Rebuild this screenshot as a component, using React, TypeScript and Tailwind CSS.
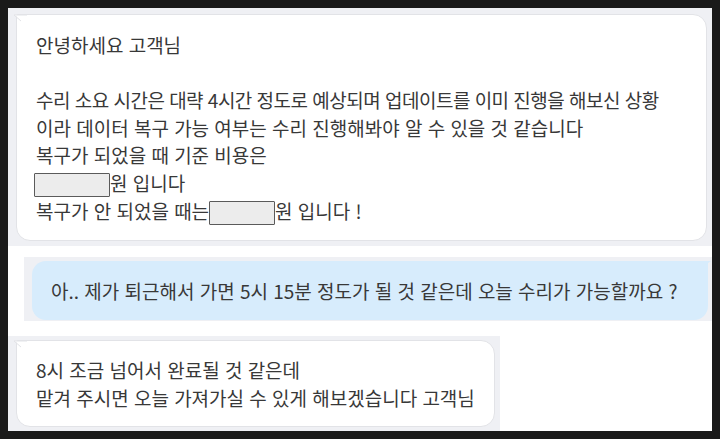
import React from "react";

const font = { fontFamily: '"Noto Sans CJK KR", "Noto Sans", sans-serif' };

function Tail({ side }: { side: "left" | "right" }) {
  // small pointed corner of a chat bubble
  if (side === "left") {
    return (
      <svg className="absolute -left-[4px] -top-px" width="14" height="10" viewBox="0 0 14 10">
        <path d="M1 1 L14 1 L14 9 Z" fill="#ffffff" />
        <path d="M14 1 L1 1 L8 7" fill="none" stroke="#e2e3e7" strokeWidth="1" />
      </svg>
    );
  }
  return (
    <svg className="absolute -right-[4px] top-0" width="14" height="10" viewBox="0 0 14 10">
      <path d="M13 0 L0 0 L0 9 Z" fill="#d7ecfc" />
    </svg>
  );
}

function Redacted({ w }: { w: string }) {
  return (
    <span
      className={`inline-block h-[24px] align-[-6px] border border-[#5a5a5a] bg-[#ececec] rounded-[1px] ${w}`}
    />
  );
}

export default function App() {
  return (
    <div
      className="w-[720px] h-[439px] bg-[#1a1a1a] p-2 flex flex-col text-[19px] leading-[27.5px] text-[#383838] whitespace-nowrap [word-spacing:1px]"
      style={font}
    >
      <div className="flex-1 bg-white flex flex-col">
        {/* first answer */}
        <div className="bg-[#eff0f4] pl-2 pr-[5px] pt-[6px] pb-[5px]">
          <div className="relative bg-white border border-[#e2e3e7] rounded-[14px] rounded-tl-[2px] pl-[19px] pr-3 pt-4 pb-[15px]">
            <Tail side="left" />
            <p>안녕하세요 고객님</p>
            <p>&nbsp;</p>
            <p className="tracking-[-0.5px]">
              수리 소요 시간은 대략 4시간 정도로 예상되며 업데이트를 이미 진행을 해보신 상황
            </p>
            <p>이라 데이터 복구 가능 여부는 수리 진행해봐야 알 수 있을 것 같습니다</p>
            <p>복구가 되었을 때 기준 비용은</p>
            <p>
              <Redacted w="w-[76px] -ml-[2px]" />원 입니다
            </p>
            <p>
              복구가 안 되었을 때는<Redacted w="w-[66px]" />원 입니다 !
            </p>
          </div>
        </div>

        {/* customer question */}
        <div className="mt-[11px] ml-4 bg-[#eff0f4] pl-2 pr-1 pt-1 pb-px">
          <div className="relative bg-[#d7ecfc] rounded-[14px] rounded-tr-[2px] pl-[19px] pr-5 py-4">
            <Tail side="right" />
            <p>아.. 제가 퇴근해서 가면 5시 15분 정도가 될 것 같은데 오늘 수리가 가능할까요 ?</p>
          </div>
        </div>

        {/* second answer */}
        <div className="mt-[15px] w-[492px] bg-[#eff0f4] pl-2 pr-[5px] pt-1 pb-1 flex-1">
          <div className="relative h-full bg-white border border-[#e2e3e7] rounded-[14px] rounded-tl-[2px] pl-[19px] pr-5 pt-[15px] pb-[14px]">
            <Tail side="left" />
            <p>8시 조금 넘어서 완료될 것 같은데</p>
            <p>맡겨 주시면 오늘 가져가실 수 있게 해보겠습니다 고객님</p>
          </div>
        </div>
      </div>
    </div>
  );
}
